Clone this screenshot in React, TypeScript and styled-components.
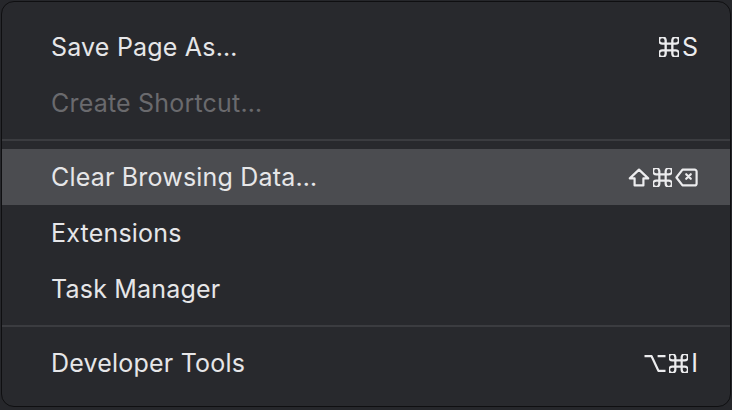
import styled, { createGlobalStyle } from "styled-components";

const GlobalStyle = createGlobalStyle`
  html, body {
    margin: 0;
    padding: 0;
    background-color: #26272b;
  }

  * {
    box-sizing: border-box;
  }
`;

const MenuPanel = styled.div`
  margin: 1px;
  width: 730px;
  height: 406px;
  padding: 17px 0 14px 0;
  background-color: #28292d;
  border: 1px solid #0f0f11;
  border-radius: 13px;
  overflow: hidden;
  font-family: Inter, "Liberation Sans", sans-serif;
`;

const MenuGroup = styled.div`
  display: flex;
  flex-direction: column;
`;

const MenuSeparator = styled.div`
  height: 2px;
  margin: 8px 0;
  background-color: #3b3c40;
`;

const MenuRow = styled.div<{ $active?: boolean; $disabled?: boolean }>`
  height: 56px;
  display: flex;
  justify-content: space-between;
  align-items: center;
  padding: 0 32px 0 49px;
  background-color: ${(p) => (p.$active ? "#4b4c50" : "transparent")};
  color: ${(p) => (p.$disabled ? "#6a6a6d" : "#e6e6e8")};
`;

const MenuLabel = styled.div`
  font-size: 25px;
  letter-spacing: 0.2px;
`;

const MenuShortcut = styled.div`
  display: flex;
  align-items: center;
  gap: 3px;
  color: #ececee;
`;

const KeyLetter = styled.span`
  font-size: 25px;
  line-height: 1;
`;

const CommandIcon = ({ size = 19 }: { size?: number }): JSX.Element => (
  <svg width={size} height={size} viewBox="3 3 18 18" fill="none" stroke="currentColor" strokeWidth={2.1} strokeLinecap="round" strokeLinejoin="round">
    <path d="M15 6v12a3 3 0 1 0 3-3H6a3 3 0 1 0 3 3V6a3 3 0 1 0-3 3h12a3 3 0 1 0-3-3" />
  </svg>
);

const ShiftIcon = (): JSX.Element => (
  <svg width={22} height={19} viewBox="0 0 22 19" fill="none" stroke="currentColor" strokeWidth={2.2} strokeLinejoin="round">
    <path d="M11 1.6 L20.2 10.4 H15.4 V17.4 H6.6 V10.4 H1.8 Z" />
  </svg>
);

const DeleteIcon = (): JSX.Element => (
  <svg width={23} height={19} viewBox="0 0 23 19" fill="none" stroke="currentColor" strokeWidth={2.2} strokeLinecap="round" strokeLinejoin="round">
    <path d="M7.5 1.6 H19.6 a2 2 0 0 1 2 2 V15.4 a2 2 0 0 1 -2 2 H7.5 L1.4 9.5 Z" />
    <path d="M11.2 6.2 L15.8 10.8 M15.8 6.2 L11.2 10.8" />
  </svg>
);

const OptionIcon = (): JSX.Element => (
  <svg width={22} height={19} viewBox="0 0 22 19" fill="none" stroke="currentColor" strokeWidth={2.2} strokeLinecap="butt" strokeLinejoin="round">
    <path d="M0.5 2.2 H7.6 L14.4 16.8 H21.5" />
    <path d="M13.6 2.2 H21.5" />
  </svg>
);

type Item = {
  label: string;
  disabled?: boolean;
  active?: boolean;
  shortcut?: JSX.Element;
};

const groups: Item[][] = [
  [
    {
      label: "Save Page As…",
      shortcut: (
        <>
          <CommandIcon size={20} />
          <KeyLetter>S</KeyLetter>
        </>
      ),
    },
    { label: "Create Shortcut…", disabled: true },
  ],
  [
    {
      label: "Clear Browsing Data…",
      active: true,
      shortcut: (
        <>
          <ShiftIcon />
          <CommandIcon />
          <DeleteIcon />
        </>
      ),
    },
    { label: "Extensions" },
    { label: "Task Manager" },
  ],
  [
    {
      label: "Developer Tools",
      shortcut: (
        <>
          <OptionIcon />
          <CommandIcon />
          <KeyLetter>I</KeyLetter>
        </>
      ),
    },
  ],
];

const App = (): JSX.Element => {
  return (
    <>
      <GlobalStyle />
      <MenuPanel>
        {groups.map((group, gi) => (
          <MenuGroup key={gi}>
            {gi > 0 ? <MenuSeparator /> : null}
            {group.map((item) => (
              <MenuRow key={item.label} $active={item.active} $disabled={item.disabled}>
                <MenuLabel>{item.label}</MenuLabel>
                {item.shortcut ? <MenuShortcut>{item.shortcut}</MenuShortcut> : null}
              </MenuRow>
            ))}
          </MenuGroup>
        ))}
      </MenuPanel>
    </>
  );
};

export default App;
